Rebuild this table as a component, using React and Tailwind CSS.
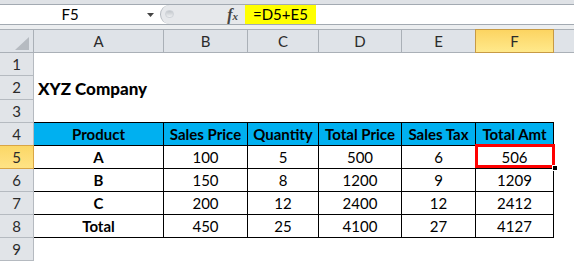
import React from "react";

const COLS = [
  { l: "A", w: "w-[130px]" },
  { l: "B", w: "w-[84px]" },
  { l: "C", w: "w-[71px]" },
  { l: "D", w: "w-[83px]" },
  { l: "E", w: "w-[74px]" },
];

const TABLE = [
  ["Product", "Sales Price", "Quantity", "Total Price", "Sales Tax", "Total Amt"],
  ["A", "100", "5", "500", "6", "506"],
  ["B", "150", "8", "1200", "9", "1209"],
  ["C", "200", "12", "2400", "12", "2412"],
  ["Total", "450", "25", "4100", "27", "4127"],
];

const WIDTHS = ["w-[130px]", "w-[84px]", "w-[71px]", "w-[83px]", "w-[74px]", "w-[78px]"];

function RowHeader({ n, selected }) {
  if (selected) {
    return (
      <div className="w-[34px] shrink-0 -mt-px border-y border-r border-[#d9a545] bg-gradient-to-b from-[#fbd766] to-[#ffe385] flex items-center justify-center text-[#2b2b2b] text-[15px]">
        {n}
      </div>
    );
  }
  return (
    <div className="w-[34px] shrink-0 border-r border-b border-[#b5bac0] bg-[#e1e4e8] flex items-center justify-center text-[#2b2b2b] text-[15px]">
      {n}
    </div>
  );
}

export default function App() {
  return (
    <div className="relative w-[574px] h-[261px] overflow-hidden bg-white font-['Lato',sans-serif] text-black">
      {/* top band */}
      <div className="h-[4px] bg-[#dfe2e6]" />
      {/* formula bar */}
      <div className="flex h-[21px] border-y border-[#a3aab2] bg-white">
        <div className="relative w-[160px] flex items-center justify-center pr-[20px] text-[15px]">
          F5
          <svg className="absolute left-[147px] top-[8px]" width="7" height="4" viewBox="0 0 7 4">
            <path d="M0 0 H7 L3.5 4 Z" fill="#444" />
          </svg>
        </div>
        <div className="relative w-[85px] bg-[#e6e8eb] rounded-l-[10px] border-l border-[#b3b8be] flex items-center">
          <div className="absolute left-[4px] top-[5px] w-[9px] h-[8px] rounded-full bg-gradient-to-b from-[#c2c6cb] to-[#eef0f2] border border-[#cfd3d8]" />
          <span className="ml-auto mr-[7px] font-['Liberation_Serif',serif] italic font-bold text-[#444] leading-none">
            <span className="text-[16px]">f</span>
            <span className="text-[11px]">x</span>
          </span>
        </div>
        <div className="w-[71px] bg-[#ffff00] pl-[8px] flex items-center text-[15px]">=D5+E5</div>
        <div className="flex-1 bg-white" />
      </div>
      <div className="h-[4px] bg-[#eceef0]" />
      {/* column header */}
      <div className="flex h-[24px] text-[#2b2b2b] text-[15px]">
        <div className="relative w-[34px] shrink-0 border-y border-r border-[#aab0b7] bg-[#dfe3e8]">
          <svg className="absolute left-[15px] top-[7px]" width="14" height="13" viewBox="0 0 14 13">
            <path d="M14 0 V13 H0 Z" fill="#b6bbc1" />
          </svg>
        </div>
        {COLS.map((c) => (
          <div
            key={c.l}
            className={`${c.w} shrink-0 border-y border-r border-[#aab0b7] bg-[#dfe3e8] flex items-center justify-center`}
          >
            {c.l}
          </div>
        ))}
        <div className="-ml-px w-[79px] shrink-0 border border-[#c79a45] bg-gradient-to-b from-[#fcd461] to-[#ffe98b] flex items-center justify-center">
          F
        </div>
        <div className="flex-1 border-y border-[#aab0b7] bg-[#dfe3e8]" />
      </div>
      {/* row 1 */}
      <div className="flex h-[23px]">
        <RowHeader n="1" />
        <div className="flex-1" />
      </div>
      {/* row 2 */}
      <div className="flex h-[24px]">
        <RowHeader n="2" />
        <div className="flex-1 flex items-center pl-[4px] pt-[1px] font-black text-[17px] whitespace-nowrap">
          XYZ Company
        </div>
      </div>
      {/* row 3 */}
      <div className="flex h-[23px]">
        <RowHeader n="3" />
        <div className="w-[520px] shrink-0 border-b border-black" />
        <div className="flex-1" />
      </div>
      {/* table rows 4-8 */}
      {TABLE.map((row, ri) => (
        <div key={ri} className="flex h-[23px]">
          <RowHeader n={String(ri + 4)} selected={ri === 1} />
          {row.map((v, ci) => (
            <div
              key={ci}
              className={`${WIDTHS[ci]} shrink-0 border-r border-b border-black flex items-center justify-center text-[15px] ${
                ri === 0 ? "bg-[#00b0f0] font-bold" : ci === 0 ? "font-bold" : ""
              }`}
            >
              {v}
            </div>
          ))}
          <div className="flex-1" />
        </div>
      ))}
      {/* row 9 */}
      <div className="flex h-[23px]">
        <RowHeader n="9" />
        <div className="flex-1" />
      </div>
      {/* selection overlay */}
      <div className="absolute left-[475px] top-[144px] w-[80px] h-[24px] border-[3px] border-[#ff0000]" />
      <div className="absolute left-[552px] top-[165px] w-[6px] h-[6px] bg-black border border-white" />
    </div>
  );
}
